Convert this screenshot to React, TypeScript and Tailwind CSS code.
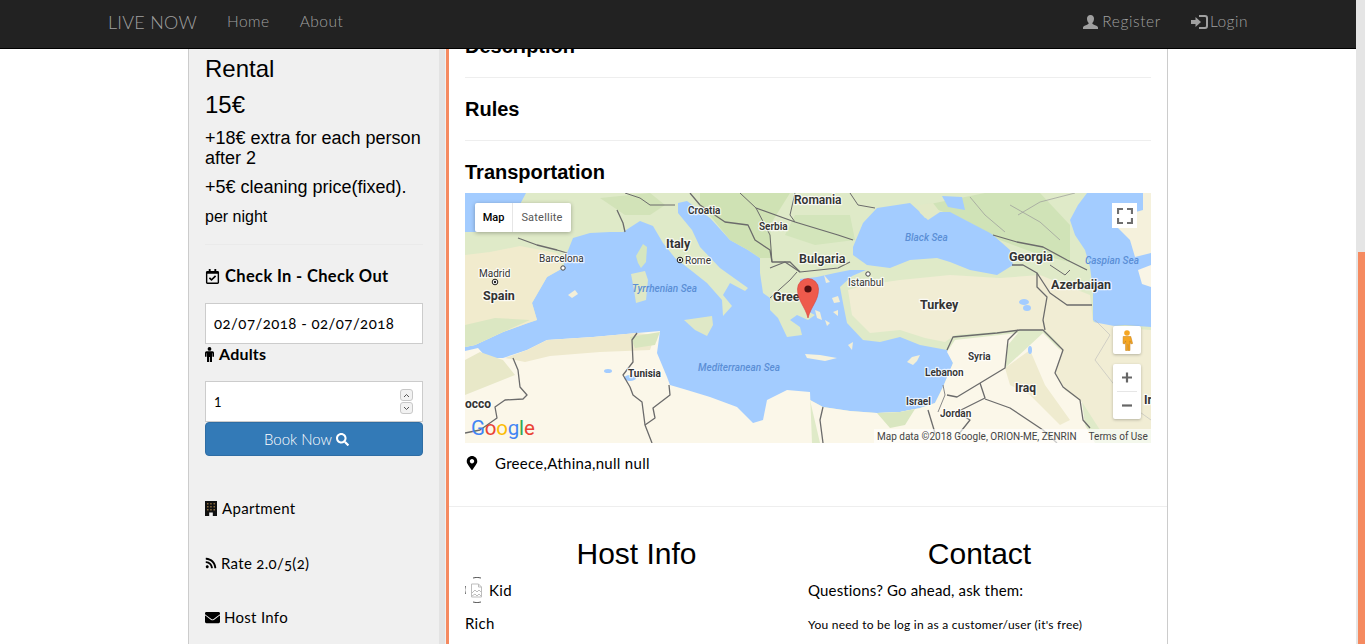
import React from "react";
import { FaRegCalendarCheck, FaRss, FaEnvelope, FaMapMarkerAlt, FaSearch } from "react-icons/fa";

const ui = "font-['Lato','Open_Sans',sans-serif]";
const arial = "font-['Liberation_Sans',Arial,sans-serif]";

const L = ({ x, y, s = 12, w = 500, c = "#333", i = false, children }: any) => (
  <text x={x} y={y} fontSize={s} fontWeight={w} fill={c} fontStyle={i ? "italic" : "normal"} fontFamily="Roboto, sans-serif" stroke={i ? "none" : "#ffffff"} strokeOpacity={0.75} strokeWidth={i ? 0 : 2.5} paintOrder="stroke" strokeLinejoin="round">{children}</text>
);

const B = ({ p, w = 1.3, c = "#6b6b6b" }: { p: string; w?: number; c?: string }) => (
  <polyline points={p} fill="none" stroke={c} strokeWidth={w} strokeLinejoin="round" />
);

function MapArt() {
  return (
    <svg viewBox="465 193 686 250" className="absolute inset-0 h-full w-full">
      <rect x="465" y="193" width="686" height="250" fill="#a3ccff" />
      {/* Europe + Anatolia + Middle East land mass */}
      <polygon fill="#dfeac8" points="526,193 1087,193 1078,205 1070,220 1075,235 1085,250 1090,267 1093,290 1093,320 1100,327 1125,325 1151,327 1151,443 810,443 810,400 823,407 850,411 877,413 900,412 920,408 935,403 943,387 953,363 947,350 920,345 900,337 880,342 863,340 847,323 843,303 840,287 852,276 866,270 850,270 835,273 817,277 800,279 800,297 805,310 815,315 808,320 797,315 790,320 800,327 802,335 787,337 778,318 770,310 770,298 763,293 760,273 760,258 748,250 730,240 710,218 687,201 678,203 678,213 692,230 700,247 720,268 748,288 745,291 730,283 723,295 732,306 723,316 722,300 707,283 688,268 675,258 663,243 653,226 640,221 623,232 610,232 590,233 573,238 567,253 563,268 547,277 532,303 537,320 528,323 503,332 475,345 465,347 465,232 500,232 512,228 517,210" />
      {/* Mountain green */}
      <polygon fill="#cfe2b4" points="700,193 790,193 770,225 772,258 760,258 748,250 730,240 712,218 700,205" />
      <polygon fill="#d3e5bb" points="795,215 850,215 855,240 815,245 785,235" />
      <polygon fill="#d0e3b7" points="925,205 985,193 1040,193 1070,225 1070,262 1040,255 1000,240 965,220" />
      <polygon fill="#d2e3b8" points="600,198 650,193 665,205 650,215 625,215" />
      {/* Spain beige */}
      <polygon fill="#f1ebcd" points="465,255 490,252 520,246 557,253 563,268 547,277 532,303 537,320 528,323 503,332 475,345 465,347" />
      <polygon fill="#dbe7c2" points="465,325 495,318 530,320 503,332 475,345 465,347" />
      {/* Turkey and east beige */}
      <polygon fill="#f1edd4" points="848,290 852,315 870,333 900,330 925,338 945,342 955,335 1020,330 1045,330 1060,345 1056,373 1065,390 1082,402 1100,430 1151,430 1151,330 1125,328 1093,322 1090,295 1040,275 1000,278 950,275 900,280 865,285" />
      {/* Desert middle east */}
      <polygon fill="#fbf7e9" points="953,363 947,352 955,340 1018,333 1008,345 1005,368 1030,345 1043,333 1062,352 1056,373 1065,390 1082,402 1085,425 1095,443 820,443 810,400 823,407 850,411 877,413 900,412 920,408 935,403 943,387" />
      <polygon fill="#d9e6c0" points="877,413 900,412 915,409 905,425 890,428" />
      <polygon fill="#efebcf" points="1005,368 1030,350 1045,385 1070,420 1060,425 1030,395 1010,385" />
      {/* North Africa */}
      <polygon fill="#fbf7e9" points="465,351 478,348 487,358 503,358 527,350 547,340 593,337 637,333 660,331 657,353 667,377 670,385 687,390 710,397 737,407 753,423 763,420 767,400 787,390 810,392 812,443 465,443" />
      <polygon fill="#e8e8c8" points="465,360 480,352 503,360 515,375 490,385 465,395" />
      <polygon fill="#eee9cd" points="505,358 527,350 547,340 593,337 637,333 655,335 650,350 600,352 550,356 525,362" />
      <polygon fill="#d9e6bf" points="630,337 660,332 655,345 635,348" />
      {/* Caspian east */}
      <polygon fill="#f5f1dc" points="1143,193 1151,193 1151,253 1135,257 1130,240 1112,222 1125,215 1143,210" />
      <polygon fill="#f9f5e6" points="1138,270 1151,265 1151,287 1142,284" />
      {/* Black sea */}
      <polygon fill="#a3ccff" points="853,247 863,223 877,208 910,203 920,212 925,218 938,212 950,212 990,233 993,235 1010,250 1013,265 997,275 970,270 950,262 937,258 910,260 890,268 867,265 853,255" />
      <polygon fill="#e2e9c7" points="918,205 933,203 940,212 928,220 920,213" />
      <polygon fill="#a3ccff" points="942,196 962,197 965,210 948,207" />
      {/* Islands */}
      <polygon fill="#d6e6bf" points="636,256 643,244 647,247 646,262 641,268 638,263" />
      <polygon fill="#dfe8c6" points="631,274 645,271 648,280 646,300 636,303 634,290" />
      <polygon fill="#dfe8c6" points="684,320 712,316 713,325 707,336 695,330" />
      <polygon fill="#f4efd8" points="568,295 575,290 578,294 572,298" />
      <polygon fill="#f6f2de" points="805,354 820,355 837,358 825,361 807,358" />
      <polygon fill="#f3efd7" points="907,362 912,357 920,355 917,361 913,365" />
      {/* Aegean islands */}
      <polygon fill="#f2eed6" points="832,298 838,296 840,302 834,303" />
      <polygon fill="#f2eed6" points="833,312 838,310 838,316" />
      <polygon fill="#f2eed6" points="815,310 820,312 822,320 817,318" />
      <polygon fill="#f2eed6" points="825,320 830,323 827,326" />
      <polygon fill="#f2eed6" points="848,345 853,342 852,350" />
      <polygon fill="#f2eed6" points="824,275 830,282 826,283" />
      {/* Lakes */}
      <ellipse cx="1027" cy="308" rx="4" ry="3" fill="#a3ccff" />
      <ellipse cx="1024" cy="302" rx="5" ry="3" fill="#a3ccff" />
      <ellipse cx="1030" cy="350" rx="2" ry="4" fill="#a3ccff" />
      <ellipse cx="630" cy="378" rx="6" ry="3" fill="#a3ccff" />
      <ellipse cx="608" cy="371" rx="4" ry="2" fill="#a3ccff" />
      {/* Borders */}
      <B p="518,238 537,245 557,250 567,253" />
      <B p="617,210 623,223 625,232" />
      <B p="625,193 640,198 650,205 675,205" w={1} />
      <B p="690,193 700,205 725,222 748,225 755,240 770,250 772,262 790,262 800,272" />
      <B p="740,193 756,208 770,235 772,262" w={1} />
      <B p="756,208 795,222 838,235 853,240" />
      <B p="795,193 790,215 795,222" w={1} />
      <B p="850,193 858,205 875,208" w={1} />
      <B p="770,268 785,262 800,272 838,268 850,262" w={1.1} />
      <B p="770,298 790,280 797,272" w={1} />
      <B p="513,358 518,370 520,387 527,395 523,399 505,400 495,407 497,418 480,430 465,433" />
      <B p="637,333 632,340 633,362 623,375 630,387 633,395 642,402 645,425 652,443" />
      <B p="669,385 670,395 653,408 655,418 645,425" />
      <B p="823,407 820,420 823,443" />
      <B p="947,350 953,337 997,333 1020,330 1043,330 1063,350 1055,373 1063,387 1080,400 1083,420 1090,428" />
      <B p="1018,330 1008,340 1005,368 957,397 947,395" />
      <B p="980,383 985,398 957,412 970,420 958,435" />
      <B p="985,399 1010,408 1043,430 1057,443" />
      <B p="928,410 935,433" />
      <B p="943,385 945,395 938,412" c="#888" w={1} />
      <B p="993,235 1017,242 1043,247 1067,260 1087,270" />
      <B p="1012,265 1023,265 1037,273 1037,287 1047,297 1043,320 1045,330" />
      <B p="1037,273 1050,293 1067,305 1092,305" />
      <B p="1050,265 1065,275 1070,270" w={1} />
      <B p="970,197 985,215 1005,232" c="#999" w={0.7} />
      <B p="1010,205 1040,222 1060,240" c="#999" w={0.7} />
      <B p="1075,193 1040,202 1018,215" c="#999" w={0.7} />
      <B p="1095,320 1110,335 1095,360 1130,405 1151,420" c="#bbb" w={0.6} />
      {/* Labels */}
      <L x="794" y="204" s={12} w={600}>Romania</L>
      <L x="688" y="214" s={10} w={600}>Croatia</L>
      <L x="759" y="230" s={10} w={600}>Serbia</L>
      <L x="666" y="248" s={12.5} w={700}>Italy</L>
      <L x="539" y="262" s={10} w={400}>Barcelona</L>
      <L x="685" y="264" s={10} w={400}>Rome</L>
      <L x="479" y="277" s={10} w={400}>Madrid</L>
      <L x="483" y="300" s={12.5} w={700}>Spain</L>
      <L x="799" y="263" s={12.5} w={600}>Bulgaria</L>
      <L x="848" y="286" s={10} w={400}>Istanbul</L>
      <L x="773" y="301" s={12.5} w={700}>Greece</L>
      <L x="920" y="309" s={12.5} w={700}>Turkey</L>
      <L x="1009" y="261" s={12.5} w={700}>Georgia</L>
      <L x="1051" y="289" s={12.5} w={700}>Azerbaijan</L>
      <L x="968" y="360" s={10} w={600}>Syria</L>
      <L x="925" y="376" s={10} w={600}>Lebanon</L>
      <L x="906" y="405" s={10} w={600}>Israel</L>
      <L x="940" y="417" s={10} w={600}>Jordan</L>
      <L x="1015" y="392" s={12} w={700}>Iraq</L>
      <L x="1144" y="404" s={12} w={700}>Ir</L>
      <L x="628" y="377" s={10} w={700}>Tunisia</L>
      <L x="465" y="408" s={12} w={700}>occo</L>
      <L x="632" y="292" s={10} i c="#5b8fd6">Tyrrhenian Sea</L>
      <L x="698" y="371" s={10} i c="#5b8fd6">Mediterranean Sea</L>
      <L x="905" y="241" s={10} i c="#5b8fd6">Black Sea</L>
      <L x="1085" y="264" s={10} i c="#5b8fd6">Caspian Sea</L>
      <circle cx="563" cy="268" r="2.2" fill="#fff" stroke="#444" strokeWidth="1" />
      <circle cx="868" cy="274" r="2.2" fill="#fff" stroke="#444" strokeWidth="1" />
      <circle cx="680" cy="260" r="2.8" fill="#fff" stroke="#222" strokeWidth="1" /><circle cx="680" cy="260" r="1.2" fill="#222" />
      <circle cx="495" cy="282" r="2.8" fill="#fff" stroke="#222" strokeWidth="1" /><circle cx="495" cy="282" r="1.2" fill="#222" />
      {/* Pin */}
      <path d="M808 318 C805 306 797.5 301 797.5 289 A10.5 10.5 0 0 1 818.5 289 C818.5 301 811 306 808 318Z" fill="#ee5a4c" stroke="#d6423a" strokeWidth="0.6" />
      <circle cx="808" cy="289" r="3.6" fill="#551010" />
    </svg>
  );
}

function BrokenAvatar() {
  return (
    <svg width="24" height="26" viewBox="0 0 24 26" className="shrink-0">
      <path d="M8 1 A12 12 0 0 1 16 1 M.4 9 A12 12 0 0 0 .4 17 M8 25 A12 12 0 0 0 16 25" fill="none" stroke="#555" strokeWidth="1" />
      <path d="M6.5 7 h7 l3 3 v10 h-10z M13.5 7 v3 h3" fill="#fff" stroke="#bdbdbd" strokeWidth="1" />
      <path d="M7 16 l3 -3 2 2 2 -2 2 2 M7 19 l3 -2 2 2 2 -2 2 2" fill="none" stroke="#bdbdbd" strokeWidth="1" />
    </svg>
  );
}

function BuildingIcon() {
  return (
    <svg width="12" height="15" viewBox="0 0 12 15" className="shrink-0">
      <rect width="12" height="15" fill="#111" />
      <path d="M2 2h1.5v1.5H2zM5.2 2h1.5v1.5H5.2zM8.5 2H10v1.5H8.5zM2 5h1.5v1.5H2zM5.2 5h1.5v1.5H5.2zM8.5 5H10v1.5H8.5zM2 8h1.5v1.5H2zM5.2 8h1.5v1.5H5.2zM8.5 8H10v1.5H8.5z" fill="#8a6a3c" />
      <rect x="4.2" y="11.5" width="3.6" height="3.5" fill="#f0f0f0" />
    </svg>
  );
}

function MaleIcon() {
  return (
    <svg width="9" height="15" viewBox="0 0 9 15" className="shrink-0" fill="currentColor">
      <circle cx="4.5" cy="1.9" r="1.9" />
      <path d="M1.5 4.2 H7.5 Q9 4.2 9 5.7 V9.8 H7.4 V6.2 H7 V15 H4.9 V10 H4.1 V15 H2 V6.2 H1.6 V9.8 H0 V5.7 Q0 4.2 1.5 4.2Z" />
    </svg>
  );
}

function GlyphUser() {
  return (
    <svg width="15" height="14" viewBox="0 0 15 14" className="shrink-0" fill="currentColor">
      <path d="M7.5 0 C10 0 11 1.8 11 3.8 C11 5.6 10.2 7.2 9.3 8 C9.3 9 10 9.3 11.5 9.9 C13.3 10.6 15 11.2 15 12.4 V14 H0 V12.4 C0 11.2 1.7 10.6 3.5 9.9 C5 9.3 5.7 9 5.7 8 C4.8 7.2 4 5.6 4 3.8 C4 1.8 5 0 7.5 0Z" />
    </svg>
  );
}

function GlyphLogin() {
  return (
    <svg width="17" height="14" viewBox="0 0 17 14" className="shrink-0" fill="currentColor">
      <path d="M0 5 H4.5 V2 L10 7 L4.5 12 V9 H0Z" />
      <path d="M8 0 H14 Q17 0 17 3 V11 Q17 14 14 14 H8 V12 H14 Q15 12 15 11 V3 Q15 2 14 2 H8Z" />
    </svg>
  );
}

export default function App() {
  return (
    <div className={`flex h-[644px] w-full overflow-hidden bg-white text-black ${ui}`}>
      <div className="flex min-w-0 flex-1 flex-col">
        <nav className="z-10 flex h-[49px] shrink-0 items-center border-b border-black bg-[#222222] pb-[4px] pl-[108px] pr-[108px] text-[15.5px] font-light text-[#a0a0a0]">
          <span className="text-[18px] tracking-[0.25px]">LIVE NOW</span>
          <span className="ml-[30px] tracking-[0.5px]">Home</span>
          <span className="ml-[30px] tracking-[0.5px]">About</span>
          <span className="ml-auto flex items-center gap-[4px] tracking-[0.6px]"><GlyphUser />Register</span>
          <span className="ml-[30px] flex items-center gap-[2px] tracking-[0.5px]"><GlyphLogin />Login</span>
        </nav>
        <div className="flex min-h-0 flex-1 overflow-hidden pl-[188px]">
          <aside className="flex w-[258px] shrink-0 border-l border-[#cccccc] bg-[#f0f0f0]">
            <div className="w-[250px] shrink-0 px-[16px]">
              <h2 className={`mt-[6px] text-[24px] leading-[28px] ${arial}`}>Rental</h2>
              <p className={`mt-[8px] text-[24px] leading-[28px] ${arial}`}>15€</p>
              <p className={`mt-[9px] text-[18px] leading-[20px] ${arial}`}>+18€ extra for each person after 2</p>
              <p className={`mt-[9px] text-[18px] leading-[20px] ${arial}`}>+5€ cleaning price(fixed).</p>
              <p className={`mt-[10px] text-[16px] leading-[20px] ${arial}`}>per night</p>
              <div className="mt-[17px] border-t border-[#eaeaea]" />
              <div className="mt-[21px] flex h-[20px] items-center gap-[5px] text-[16.5px] font-bold tracking-[0.35px]"><FaRegCalendarCheck className="text-[15px]" />Check In - Check Out</div>
              <div className="mt-[17px] flex h-[41px] w-[218px] items-center border border-[#cccccc] bg-white pl-[8px] text-[15px] tracking-[0.45px] [font-variant-numeric:oldstyle-nums]">02/07/2018 - 02/07/2018</div>
              <div className="flex h-[20px] items-center gap-[5px] text-[16px] font-bold tracking-[0.2px]"><MaleIcon />Adults</div>
              <div className="mt-[17px] flex h-[41px] w-[218px] items-center justify-between border border-[#cccccc] bg-white pl-[8px] pr-[9px] text-[13px]">
                <span className="pt-[2px]">1</span>
                <span className="flex flex-col gap-[1px] text-[#555]">
                  <span className="flex h-[12px] w-[13px] items-center justify-center rounded-[3px] border border-[#c8c8c8] bg-[#f2f2f2]"><svg width="7" height="5" viewBox="0 0 7 5"><path d="M1 4 L3.5 1.5 L6 4" fill="none" stroke="#555" /></svg></span>
                  <span className="flex h-[12px] w-[13px] items-center justify-center rounded-[3px] border border-[#c8c8c8] bg-[#f2f2f2]"><svg width="7" height="5" viewBox="0 0 7 5"><path d="M1 1 L3.5 3.5 L6 1" fill="none" stroke="#555" /></svg></span>
                </span>
              </div>
              <div className="flex h-[34px] w-[218px] items-center justify-center gap-[4px] rounded-[4px] border border-[#2e6da4] bg-[#337ab7] pr-[15px] text-[15px] font-light text-white">Book Now <FaSearch className="text-[13px]" /></div>
              <div className="mt-[42px] flex h-[20px] items-center gap-[5px] text-[15px] tracking-[0.3px]"><BuildingIcon />Apartment</div>
              <div className="mt-[35px] flex h-[20px] items-center gap-[4px] text-[15px] tracking-[0.3px] [font-variant-numeric:oldstyle-nums]"><FaRss className="text-[12px]" />Rate 2.0/5(2)</div>
              <div className="mt-[34px] flex h-[20px] items-center gap-[4px] text-[15px] tracking-[0.3px]"><FaEnvelope className="text-[15px]" />Host Info</div>
            </div>
            <div className="w-[6px] bg-[#e3e3e3]" />
          </aside>
          <main className="w-[722px] shrink-0 border-l-[3px] border-r border-l-[#f58a60] border-r-[#cccccc]">
            <div className="-mt-[15px] px-[16px]">
              <h3 className={`flex h-[24px] items-center text-[20px] font-bold ${arial}`}>Description</h3>
              <div className="mt-[19px] border-t border-[#eeeeee]" />
              <h3 className={`mt-[19px] flex h-[24px] items-center text-[20px] font-bold ${arial}`}>Rules</h3>
              <div className="mt-[19px] border-t border-[#eeeeee]" />
              <h3 className={`mt-[19px] flex h-[24px] items-center text-[20px] font-bold ${arial}`}>Transportation</h3>
              <div className="relative mt-[9px] h-[250px] w-[686px] overflow-hidden">
                <MapArt />
                <div className="absolute left-[10px] top-[10px] flex h-[29px] w-[96px] items-center rounded-[2px] bg-white font-['Roboto',sans-serif] text-[11px] shadow-[0_1px_4px_rgba(0,0,0,0.3)]">
                  <span className="flex h-full w-[38px] items-center justify-center border-r border-[#e6e6e6] pt-[1px] font-medium text-black">Map</span>
                  <span className="flex h-full flex-1 items-center justify-center pt-[1px] tracking-[0.2px] text-[#565656]">Satellite</span>
                </div>
                <div className="absolute left-[647px] top-[10px] flex h-[25px] w-[25px] items-center justify-center bg-white">
                  <svg width="16" height="16" viewBox="0 0 16 16"><path d="M1 6 V1 H6 M10 1 H15 V6 M15 10 V15 H10 M6 15 H1 V10" fill="none" stroke="#6f6f6f" strokeWidth="2.2" /></svg>
                </div>
                <div className="absolute left-[648px] top-[133px] flex h-[28px] w-[28px] items-center justify-center rounded-[2px] bg-white shadow-[0_1px_3px_rgba(0,0,0,0.25)]">
                  <svg width="12" height="21" viewBox="0 0 12 21"><circle cx="6" cy="3" r="2.8" fill="#f5a623" /><path d="M2.2 6.5 h7.6 l1.8 7 -1.7 .4 -.9 -3 v9.6 h-2 v-6 h-.4 v6 h-2 v-9.6 l-.9 3 -1.7 -.4z" fill="#f5a623" stroke="#c07a10" strokeWidth=".5" /></svg>
                </div>
                <div className="absolute left-[648px] top-[171px] flex h-[55px] w-[28px] flex-col items-center rounded-[2px] bg-white shadow-[0_1px_3px_rgba(0,0,0,0.25)]">
                  <svg width="12" height="27" viewBox="0 0 12 27" className="shrink-0"><path d="M1 13.5 H11 M6 8.5 V18.5" stroke="#666" strokeWidth="2.2" /></svg>
                  <div className="h-px w-[20px] bg-[#e6e6e6]" />
                  <svg width="12" height="27" viewBox="0 0 12 27" className="shrink-0"><path d="M1 13.5 H11" stroke="#666" strokeWidth="2.2" /></svg>
                </div>
                <div className="absolute bottom-[2px] left-[6px] font-['Roboto',sans-serif] text-[20.5px] font-normal leading-[26px] tracking-[-0.2px]">
                  <span className="text-[#4285f4]">G</span><span className="text-[#ea4335]">o</span><span className="text-[#fbbc05]">o</span><span className="text-[#4285f4]">g</span><span className="text-[#34a853]">l</span><span className="text-[#ea4335]">e</span>
                </div>
                <div className="absolute bottom-0 right-0 flex h-[14px] w-[277px] items-center bg-white/65 pl-[3px] font-['Roboto',sans-serif] text-[10px] text-[#444]">
                  <span>Map data ©2018 Google, ORION-ME, ZENRIN</span>
                  <span className="ml-[12px]">Terms of Use</span>
                </div>
              </div>
              <div className="mt-[9px] flex h-[22px] items-center text-[15px] tracking-[0.3px]">
                <span className="w-[30px]"><FaMapMarkerAlt className="text-[14px]" /></span>Greece,Athina,null null
              </div>
            </div>
            <div className="mt-[32px] border-t border-[#eeeeee]" />
            <div className="flex px-[16px] pt-[30px]">
              <div className="w-[343px]">
                <h2 className={`text-center text-[30px] leading-[33px] ${arial}`}>Host Info</h2>
                <div className="mt-[7px] flex h-[26px] items-center text-[15px] tracking-[0.3px]"><BrokenAvatar />Kid</div>
                <div className="mt-[10px] text-[15px] leading-[20px] tracking-[0.3px]">Rich</div>
              </div>
              <div className="w-[343px]">
                <h2 className={`text-center text-[30px] leading-[33px] ${arial}`}>Contact</h2>
                <div className="mt-[7px] flex h-[26px] items-center text-[15px] tracking-[0.15px]">Questions? Go ahead, ask them:</div>
                <div className="mt-[12px] text-[12px] leading-[20px] tracking-[0.25px]">You need to be log in as a customer/user (it's free)</div>
              </div>
            </div>
          </main>
        </div>
      </div>
      <div className="w-[9px] shrink-0 bg-[#e5e5e5] pl-[2px] pt-[252px]">
        <div className="h-full bg-[#f58a60]" />
      </div>
    </div>
  );
}
